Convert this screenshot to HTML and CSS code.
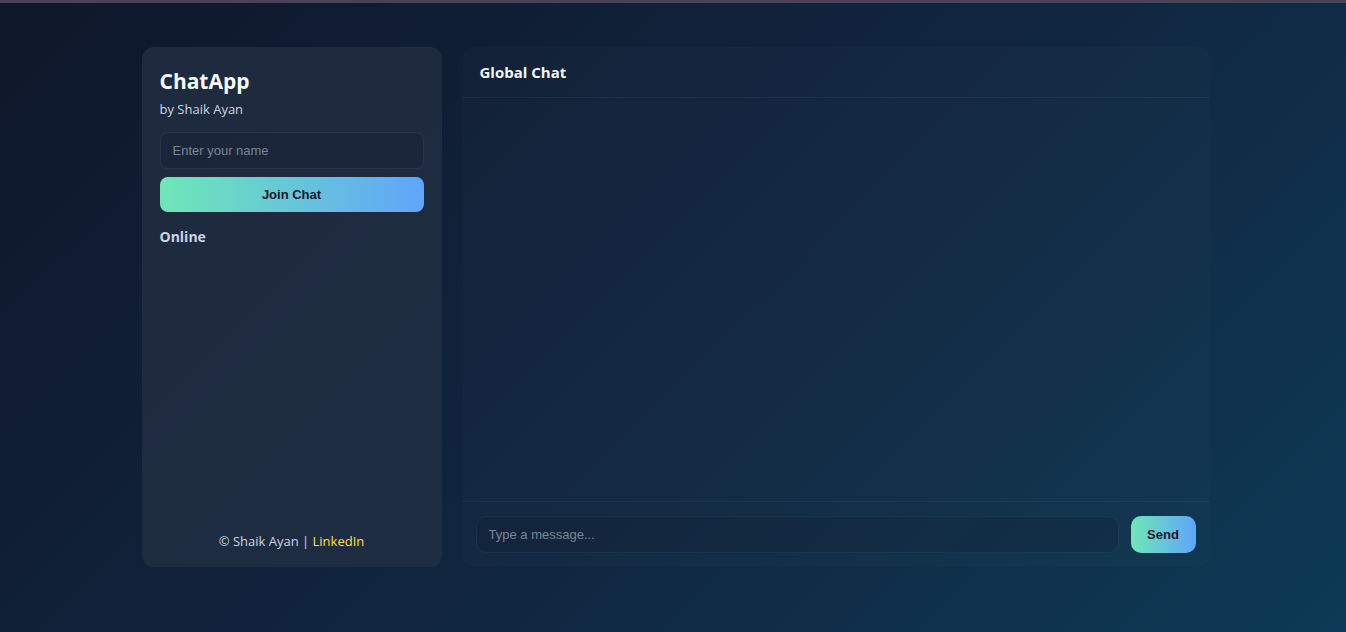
FILE: index.html
```html
<!DOCTYPE html>
<html lang="en">
<head>
<meta charset="utf-8">
<title>ChatApp</title>
<link rel="stylesheet" href="styles.css">
</head>
<body>
<div class="topbar"></div>
<div class="page">
  <div class="app">
    <aside class="sidebar">
      <h1 class="brand">ChatApp</h1>
      <div class="byline">by Shaik Ayan</div>
      <input class="name-input" type="text" placeholder="Enter your name">
      <button class="join-btn">Join Chat</button>
      <h3 class="online-title">Online</h3>
      <div class="online-list"></div>
      <div class="footer">© Shaik Ayan | <a class="link" href="#">LinkedIn</a></div>
    </aside>
    <main class="chat">
      <div class="chat-header">Global Chat</div>
      <div class="messages"></div>
      <div class="composer">
        <input class="msg-input" type="text" placeholder="Type a message...">
        <button class="send-btn">Send</button>
      </div>
    </main>
  </div>
</div>
</body>
</html>
```
FILE: styles.css
```css
* { box-sizing: border-box; }
html, body { margin: 0; height: 100%; }
body {
  font-family: "Open Sans", "Noto Sans", "Liberation Sans", sans-serif;
  background: linear-gradient(135deg, #0f172a 0%, #112640 55%, #0d3a56 100%);
  color: #e2e8f0;
  overflow: hidden;
}
.topbar { height: 3px; background: #4b4257; }
.page {
  display: flex;
  justify-content: center;
  padding: 44px 0 0 5px;
}
.app {
  display: flex;
  gap: 20px;
  height: 520px;
}
.sidebar {
  width: 300px;
  background: rgba(36, 48, 68, 0.72);
  border-radius: 12px;
  padding: 18px 18px 17px;
  display: flex;
  flex-direction: column;
}
.brand {
  margin: 1px 0 0;
  font-size: 21px;
  font-weight: 700;
  color: #f8fafc;
  line-height: 30px;
}
.byline {
  font-size: 13px;
  color: #cbd5e1;
  margin-top: 4px;
  line-height: 18px;
}
.name-input {
  margin-top: 14px;
  height: 37px;
  border-radius: 8px;
  border: 1px solid rgba(255,255,255,0.07);
  background: rgba(15, 23, 42, 0.25);
  color: #e2e8f0;
  padding: 0 12px;
  font-family: "Liberation Sans", Arial, sans-serif;
  font-size: 13px;
  outline: none;
}
.name-input::placeholder, .msg-input::placeholder { color: #7b8594; }
.join-btn {
  margin-top: 8px;
  height: 35px;
  border: 0;
  border-radius: 8px;
  background: linear-gradient(90deg, #6ee7b7, #60a5fa);
  color: #0f172a;
  font-family: "Liberation Sans", Arial, sans-serif;
  font-size: 13px;
  font-weight: 600;
}
.online-title {
  margin: 15px 0 0;
  font-size: 14px;
  font-weight: 700;
  color: #cbd5e1;
  line-height: 20px;
}
.online-list { flex: 1; }
.footer {
  text-align: center;
  font-size: 13px;
  color: #cbd5e1;
  line-height: 18px;
}
.link { color: #fde047; text-decoration: none; }
.chat {
  width: 748px;
  background: rgba(255,255,255,0.015);
  border-radius: 12px;
  display: flex;
  flex-direction: column;
}
.chat-header {
  height: 51px;
  padding: 0 18px;
  display: flex;
  align-items: center;
  font-size: 15px;
  font-weight: 700;
  color: #f1f5f9;
  border-bottom: 1px solid rgba(255,255,255,0.045);
}
.messages { flex: 1; }
.composer {
  border-top: 1px solid rgba(255,255,255,0.045);
  padding: 14px;
  display: flex;
  gap: 12px;
  height: 66px;
}
.msg-input {
  flex: 1;
  height: 37px;
  border-radius: 10px;
  border: 1px solid rgba(255,255,255,0.05);
  background: rgba(15, 23, 42, 0.2);
  color: #e2e8f0;
  padding: 0 12px;
  font-family: "Liberation Sans", Arial, sans-serif;
  font-size: 13px;
  outline: none;
}
.send-btn {
  width: 65px;
  height: 37px;
  border: 0;
  border-radius: 10px;
  background: linear-gradient(90deg, #6ee7b7, #60a5fa);
  color: #0f172a;
  font-family: "Liberation Sans", Arial, sans-serif;
  font-size: 13px;
  font-weight: 700;
}
```
